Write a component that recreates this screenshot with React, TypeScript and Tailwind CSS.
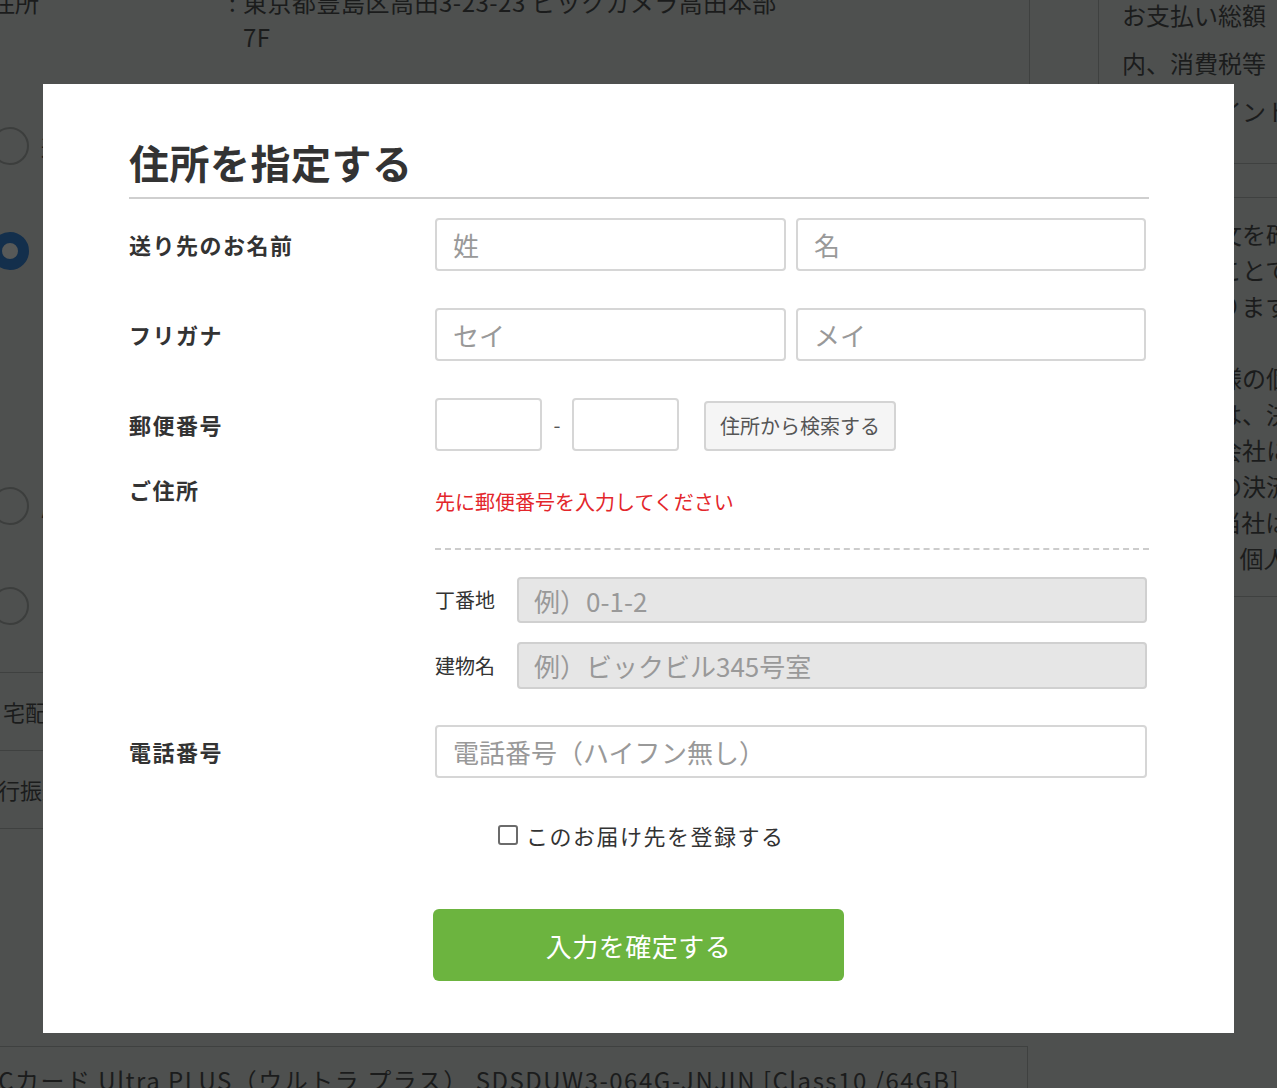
import React from 'react';

const PageBehind: React.FC = () => {
  return (
    <div className="flex items-start">
      {/* main column */}
      <div className="w-[1030px] shrink-0 flex flex-col">
        <div className="-mt-[16px] h-[110px] border-r border-[#3f4140] flex text-[24px] leading-[35px]">
          <div className="-ml-[9px] w-[238px] shrink-0">住所</div>
          <div className="w-[14px] shrink-0">:</div>
          <div className="w-[600px] tracking-[0.5px]">
            東京都豊島区高田3-23-23 ビックカメラ高田本部
            <br />
            7F
          </div>
        </div>

        <div className="mt-[33px] h-[38px] flex items-center text-[22px]">
          <span className="-ml-[9px] w-[38px] h-[38px] shrink-0 rounded-full border-2 border-[#3c3e3d]" />
          <span className="ml-[12px]">通常配送</span>
        </div>
        <div className="mt-[67px] h-[38px] flex items-center text-[22px]">
          <span className="-ml-[9px] w-[38px] h-[38px] shrink-0 rounded-full border-[11px] border-[#132f4c] bg-[#575958]" />
          <span className="ml-[12px] text-[#5a4a2a]">お届け日時指定</span>
        </div>
        <div className="mt-[217px] h-[38px] flex items-center text-[22px]">
          <span className="-ml-[9px] w-[38px] h-[38px] shrink-0 rounded-full border-2 border-[#3c3e3d]" />
          <span className="ml-[12px]">店舗受取</span>
        </div>
        <div className="mt-[62px] h-[38px] flex items-center text-[22px]">
          <span className="-ml-[9px] w-[38px] h-[38px] shrink-0 rounded-full border-2 border-[#3c3e3d]" />
          <span className="ml-[12px] text-[#2a3a5a]">コンビニ受取</span>
        </div>

        <div className="mt-[47px] border-t border-[#3f4140] text-[22px]">
          <div className="h-[78px] border-b border-[#3f4140] flex items-center">
            <span className="pl-[3px]">宅配便</span>
          </div>
          <div className="h-[78px] border-b border-[#3f4140] flex items-center">
            <span className="-ml-[24px]">銀行振込</span>
          </div>
        </div>

        <div className="mt-[217px] w-[1028px] border-t border-r border-[#3f4140] pt-[17px] text-[24px] leading-[32px] tracking-[1.5px] whitespace-nowrap">
          <span className="-ml-[50px]">SDXCカード Ultra PLUS（ウルトラ プラス） SDSDUW3-064G-JNJIN [Class10 /64GB]</span>
        </div>
      </div>

      {/* order summary */}
      <div className="ml-[68px] w-[220px] h-[640px] shrink-0 border-l border-[#3f4140] text-[24px] whitespace-nowrap">
        <div className="-mt-[9px] pl-[23px] pb-[28px] leading-[48px] border-b border-[#3f4140]">
          <div>お支払い総額</div>
          <div>内、消費税等</div>
          <div>ご利用ポイント</div>
        </div>
        <div className="mt-[33px] pl-[23px] pt-[18px] pb-[20px] leading-[36px] border-t border-b border-[#3f4140]">
          <div>上記ご注文を確定</div>
          <div>確定することで</div>
          <div>ものとなります</div>
          <div>&nbsp;</div>
          <div>ご購入者様の個</div>
          <div>個人情報は、決済</div>
          <div>決済代行会社に</div>
          <div>各カードの決済</div>
          <div>ません。当社は</div>
          <div>おります。個人</div>
        </div>
      </div>
    </div>
  );
};

const labelCls = 'w-[306px] shrink-0 text-[22px] font-bold tracking-[1.5px]';
const inputCls =
  'h-[53px] px-[16px] border-2 border-[#d6d6d6] rounded-[4px] bg-white text-[26px] text-[#333] placeholder:text-[#999] outline-none';
const greyInputCls =
  'w-[630px] px-[15px] border-2 border-[#d0d0d0] rounded-[4px] bg-[#e6e6e6] text-[26px] text-[#333] placeholder:text-[#999] outline-none';

const AddressModal: React.FC = () => {
  return (
    <div className="absolute left-[43px] top-[84px] w-[1191px] h-[949px] bg-white pl-[86px] pr-[85px] text-[#333]">
      <h2 className="pt-[48px] pb-[5px] leading-[60px] text-[40px] font-bold tracking-[0.5px] border-b-2 border-[#cfcfcf]">
        住所を指定する
      </h2>

      <div className="mt-[19px] flex items-center">
        <div className={labelCls}>送り先のお名前</div>
        <div className="flex gap-[10px]">
          <input className={`${inputCls} w-[351px]`} placeholder="姓" />
          <input className={`${inputCls} w-[350px]`} placeholder="名" />
        </div>
      </div>

      <div className="mt-[37px] flex items-center">
        <div className={labelCls}>フリガナ</div>
        <div className="flex gap-[10px]">
          <input className={`${inputCls} w-[351px]`} placeholder="セイ" />
          <input className={`${inputCls} w-[350px]`} placeholder="メイ" />
        </div>
      </div>

      <div className="mt-[37px] flex items-center">
        <div className={labelCls}>郵便番号</div>
        <div className="flex items-center">
          <input className={`${inputCls} w-[107px]`} />
          <span className="mx-[10px] w-[10px] text-center text-[20px] text-[#555]">-</span>
          <input className={`${inputCls} w-[107px]`} />
          <button
            type="button"
            className="ml-[25px] mt-[3px] h-[50px] w-[192px] border-2 border-[#d4d4d4] rounded-[4px] bg-[#f5f5f5] text-[20px] text-[#555]"
          >
            住所から検索する
          </button>
        </div>
      </div>

      <div className="mt-[14px] flex items-start">
        <div className={`${labelCls} leading-[48px]`}>ご住所</div>
        <div className="w-[714px]">
          <p className="mt-[22px] leading-[30px] text-[20px] text-[#e3262b]">先に郵便番号を入力してください</p>
          <div className="mt-[31px] border-t-2 border-dashed border-[#cccccc]" />
          <div className="mt-[27px] flex items-center">
            <span className="w-[82px] shrink-0 text-[20px]">丁番地</span>
            <input className={`${greyInputCls} h-[46px]`} placeholder="例）0-1-2" />
          </div>
          <div className="mt-[19px] flex items-center">
            <span className="w-[82px] shrink-0 text-[20px]">建物名</span>
            <input className={`${greyInputCls} h-[47px]`} placeholder="例）ビックビル345号室" />
          </div>
        </div>
      </div>

      <div className="mt-[36px] flex items-center">
        <div className={labelCls}>電話番号</div>
        <input className={`${inputCls} w-[712px]`} placeholder="電話番号（ハイフン無し）" />
      </div>

      <label className="mt-[42px] pl-[369px] flex items-center leading-[30px] text-[22px] tracking-[1.5px]">
        <input
          type="checkbox"
          className="appearance-none w-[20px] h-[20px] shrink-0 border-2 border-[#6b6b6b] rounded-[3px] bg-white"
        />
        <span className="ml-[8px]">このお届け先を登録する</span>
      </label>

      <button
        type="button"
        className="mt-[59px] ml-[304px] block w-[411px] h-[72px] rounded-[6px] bg-[#6cb43f] text-[26px] text-white tracking-[0.5px]"
      >
        入力を確定する
      </button>
    </div>
  );
};

const App: React.FC = () => {
  return (
    <div className="relative w-full h-[1088px] overflow-hidden bg-[#4e504f] text-[#1b1c1c] font-['Noto_Sans_CJK_JP','Noto_Sans',sans-serif]">
      <PageBehind />
      <AddressModal />
    </div>
  );
};

export default App;
